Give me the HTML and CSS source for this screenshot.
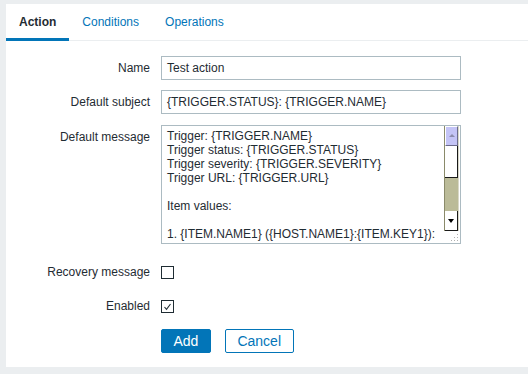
FILE: index.html
```html
<!DOCTYPE html>
<html>
<head>
<meta charset="utf-8">
<link rel="stylesheet" href="styles.css">
</head>
<body>
<div class="panel">
  <div class="tabs">
    <div class="tab active">Action</div>
    <div class="tab">Conditions</div>
    <div class="tab">Operations</div>
  </div>
  <div class="form">
    <div class="row">
      <div class="label">Name</div>
      <div class="input">Test action</div>
    </div>
    <div class="row">
      <div class="label">Default subject</div>
      <div class="input">{TRIGGER.STATUS}: {TRIGGER.NAME}</div>
    </div>
    <div class="row row-top">
      <div class="label label-top">Default message</div>
      <div class="textarea">
        <div class="ta-text">Trigger: {TRIGGER.NAME}
Trigger status: {TRIGGER.STATUS}
Trigger severity: {TRIGGER.SEVERITY}
Trigger URL: {TRIGGER.URL}

Item values:

1. {ITEM.NAME1} ({HOST.NAME1}:{ITEM.KEY1}):</div>
        <div class="side">
          <div class="scrollbar">
            <div class="sb-up"><span class="arrow-up"></span></div>
            <div class="sb-thumb"></div>
            <div class="sb-track"></div>
            <div class="sb-down"><span class="arrow-down"></span></div>
          </div>
          <div class="grip">
            <svg width="9" height="9" viewBox="0 0 9 9"><g fill="#b0b0b0"><rect x="7" y="1" width="1" height="1"/><rect x="4" y="4" width="1" height="1"/><rect x="7" y="4" width="1" height="1"/><rect x="1" y="7" width="1" height="1"/><rect x="4" y="7" width="1" height="1"/><rect x="7" y="7" width="1" height="1"/></g></svg>
          </div>
        </div>
      </div>
    </div>
    <div class="row row-check1">
      <div class="label">Recovery message</div>
      <div class="checkbox"></div>
    </div>
    <div class="row">
      <div class="label">Enabled</div>
      <div class="checkbox"><svg width="11" height="11" viewBox="0 0 11 11"><path d="M2.5 6 L4.5 8.3 L8.5 3" fill="none" stroke="#1f2c33" stroke-width="1.1"/></svg></div>
    </div>
    <div class="row row-buttons">
      <div class="label"></div>
      <div class="buttons">
        <button class="btn btn-primary">Add</button>
        <button class="btn btn-alt">Cancel</button>
      </div>
    </div>
  </div>
</div>
</body>
</html>
```
FILE: styles.css
```css
html, body {
  margin: 0;
  padding: 0;
}
body {
  background: #ebeef0;
  font-family: "Liberation Sans", Arial, sans-serif;
  font-size: 12px;
  color: #1f2c33;
  width: 528px;
  height: 374px;
  overflow: hidden;
}
.panel {
  margin: 4px 0 0 6px;
  background: #ffffff;
  height: 363px;
  box-sizing: border-box;
}
.tabs {
  display: flex;
  height: 36px;
  border-bottom: 1px solid #ebeef0;
}
.tab {
  height: 37px;
  box-sizing: border-box;
  padding: 1px 13px 3px;
  display: flex;
  align-items: center;
  color: #0275b8;
}
.tab.active {
  color: #1f2c33;
  font-weight: bold;
  border-bottom: 3px solid #0275b8;
  padding-bottom: 0;
}
.form {
  padding-top: 15px;
}
.row {
  display: flex;
  align-items: center;
  min-height: 24px;
  margin-bottom: 10px;
}
.row-top {
  align-items: flex-start;
  margin-top: 11px;
  margin-bottom: 16px;
}
.label {
  width: 144px;
  flex: none;
  text-align: right;
  margin-right: 11px;
  line-height: 14px;
}
.label-top {
  padding-top: 5px;
}
.input {
  width: 300px;
  height: 24px;
  box-sizing: border-box;
  border: 1px solid #acbbc2;
  padding: 0 5px;
  line-height: 22px;
  white-space: nowrap;
  overflow: hidden;
}
.textarea {
  width: 300px;
  height: 119px;
  box-sizing: border-box;
  border: 1px solid #acbbc2;
  display: flex;
  overflow: hidden;
}
.ta-text {
  flex: 1;
  min-width: 0;
  padding: 3px 0 0 5px;
  line-height: 14px;
  white-space: pre-wrap;
  overflow: hidden;
}
.side {
  width: 15px;
  margin-right: 1px;
  display: flex;
  flex-direction: column;
}
.scrollbar {
  display: flex;
  flex-direction: column;
  height: 105px;
  box-sizing: border-box;
  border-left: 1px solid #8a8a6a;
  border-right: 1px solid #d8d8c8;
}
.sb-up {
  height: 20px;
  box-sizing: border-box;
  background: #c4c4f6;
  border: 1px solid #ffffff;
  border-right-color: #6a6a8a;
  border-bottom-color: #6a6a8a;
  display: flex;
  justify-content: center;
  padding-top: 7px;
}
.arrow-up {
  width: 0;
  height: 0;
  border-left: 3px solid transparent;
  border-right: 3px solid transparent;
  border-bottom: 3px solid #8c8cac;
}
.sb-thumb {
  height: 32px;
  box-sizing: border-box;
  background: #ffffff;
  border-right: 1px solid #1a1a1a;
  border-bottom: 1px solid #1a1a1a;
}
.sb-track {
  height: 33px;
  background: #bbbb98;
}
.sb-down {
  height: 20px;
  box-sizing: border-box;
  background: #ffffff;
  border-right: 1px solid #1a1a1a;
  border-bottom: 1px solid #1a1a1a;
  display: flex;
  justify-content: center;
  padding-top: 8px;
}
.arrow-down {
  width: 0;
  height: 0;
  border-left: 3px solid transparent;
  border-right: 3px solid transparent;
  border-top: 4px solid #000000;
}
.grip {
  flex: 1;
  display: flex;
  justify-content: flex-end;
  align-items: flex-end;
  padding-bottom: 1px;
}
.grip svg {
  display: block;
}
.row-check1 {
  margin-bottom: 10px;
}
.checkbox {
  width: 13px;
  height: 13px;
  box-sizing: border-box;
  border: 1px solid #1f2c33;
  display: flex;
  align-items: center;
  justify-content: center;
}
.checkbox svg {
  display: block;
}
.row-buttons {
  margin-top: 11px;
  margin-bottom: 0;
}
.buttons {
  display: flex;
  gap: 14px;
}
.btn {
  height: 24px;
  box-sizing: border-box;
  padding: 0 11.5px;
  border-radius: 2px;
  border: 1px solid #0275b8;
  font-family: "Liberation Sans", Arial, sans-serif;
  font-size: 14px;
  line-height: 22px;
  cursor: pointer;
}
.btn-primary {
  background: #0275b8;
  color: #ffffff;
}
.btn-alt {
  background: #ffffff;
  color: #0275b8;
}
```
